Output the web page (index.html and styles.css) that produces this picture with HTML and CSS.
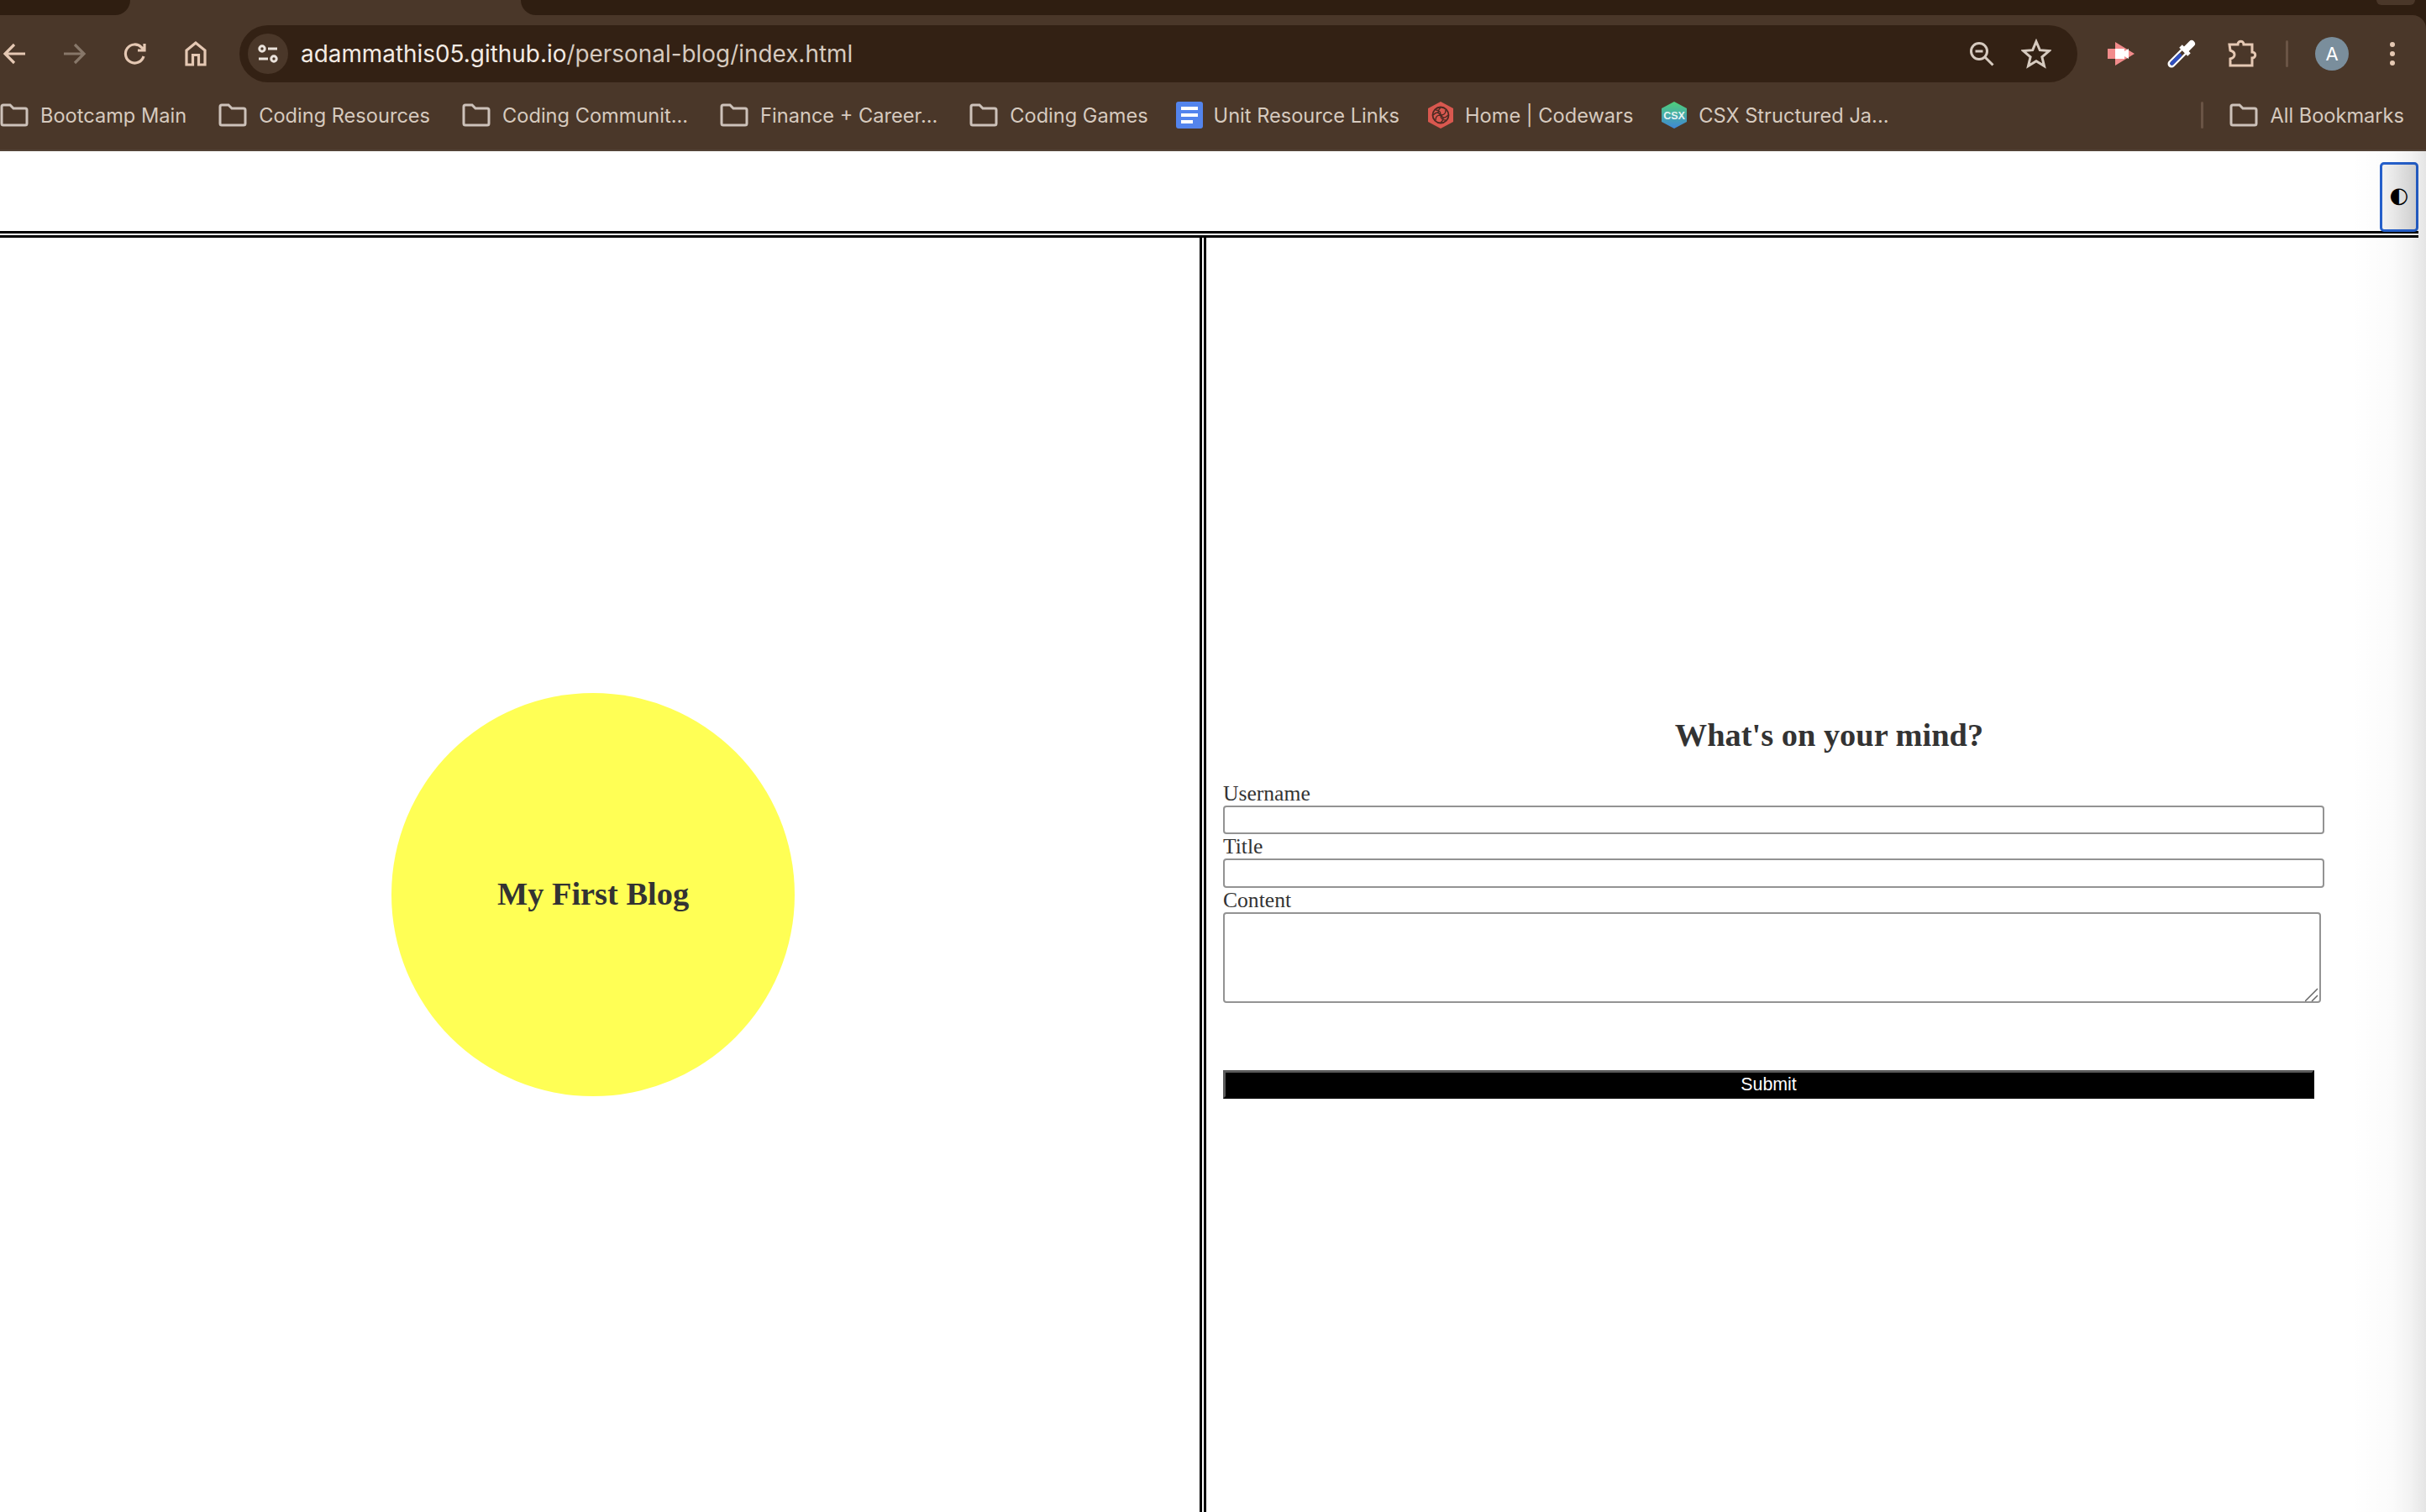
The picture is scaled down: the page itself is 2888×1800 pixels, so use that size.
FILE: index.html
```html
<!DOCTYPE html>
<html lang="en">
<head>
<meta charset="utf-8">
<title>My First Blog</title>
<link rel="stylesheet" href="styles.css">
</head>
<body>
<div class="chrome">
  <div class="tabstrip">
    <div class="tab-left"></div>
    <div class="tab-right"><span class="tab-bump"></span></div>
  </div>
  <div class="toolbar">
    <span class="nav-btn first"><svg class="ico" width="32" height="32" viewBox="0 0 32 32"><path d="M29 16H6M16 5 5 16l11 11" class="st peach"/></svg></span>
    <span class="nav-btn"><svg class="ico" width="32" height="32" viewBox="0 0 32 32"><path d="M3 16h23M16 5l11 11-11 11" class="st dim"/></svg></span>
    <span class="nav-btn"><svg class="ico" width="32" height="32" viewBox="0 0 32 32"><path d="M26 19a11 11 0 1 1-2.500-10.500L27 12M27 4v8h-8" class="st peach"/></svg></span>
    <span class="nav-btn"><svg class="ico" width="32" height="32" viewBox="0 0 32 32"><path d="M16 3 5 12v17h7.500V17.500h7V29H27V12z" class="st peach"/></svg></span>
    <div class="omnibox">
      <span class="site-chip"><svg width="28" height="28" viewBox="0 0 28 28"><circle cx="7" cy="8" r="3.200" class="st light thin"/><path d="M14 8h11M3 20h11" class="st light thin"/><circle cx="21" cy="20" r="3.200" class="st light thin"/></svg></span>
      <span class="url"><span class="url-host">adammathis05.github.io</span>/personal-blog/index.html</span>
      <svg class="omni-zoom" width="32" height="32" viewBox="0 0 32 32"><circle cx="13" cy="13" r="9.500" class="st muted thin"/><path d="M8.500 13h9M20 20l9.500 9.500" class="st muted thin"/></svg>
      <svg class="omni-star" width="36" height="36" viewBox="0 0 36 36"><path d="M18 3.500l4.300 10.200 11 .9-8.400 7.200 2.600 10.800L18 26.800 8.500 32.600l2.600-10.800L2.700 14.600l11-.9z" class="st muted thin"/></svg>
    </div>
    <span class="ext first-ext"><svg width="34" height="30" viewBox="0 0 34 30"><path d="M10 1 33 15 10 29V21H1V9h9z" fill="#f28b8b"/><path d="M10 9h11v3l5-3v12l-5-3v3H10z" fill="#fff"/></svg></span>
    <span class="ext"><svg width="34" height="34" viewBox="0 0 34 34"><path d="M5 29 21 13" class="bottle-outer"/><path d="M5.500 28.500 21 13" class="bottle-inner"/><path d="M5.500 28.500 15 19" class="bottle-ink"/><path d="M16 8 26 18" class="bottle-collar"/><path d="M23 11 29 5" class="bottle-cap"/></svg></span>
    <span class="ext"><svg width="36" height="36" viewBox="0 0 36 36"><path d="M3 7h10c0-5 7-5 7 0h10v9c5 0 5 7 0 7v9H4v-8c4-1 5-3 5-5s-2-4-5-5z" class="st peach thin"/></svg></span>
    <span class="tool-sep"></span>
    <span class="avatar">A</span>
    <span class="menu-dots"><i></i><i></i><i></i></span>
  </div>
  <div class="bookmarks">
    <a class="bm"><svg class="folder" width="34" height="28" viewBox="0 0 34 28"><path d="M2 4a2 2 0 0 1 2-2h8l4 4h14a2 2 0 0 1 2 2v16a2 2 0 0 1-2 2H4a2 2 0 0 1-2-2z" class="st folder-st"/></svg>Bootcamp Main</a>
    <a class="bm"><svg class="folder" width="34" height="28" viewBox="0 0 34 28"><path d="M2 4a2 2 0 0 1 2-2h8l4 4h14a2 2 0 0 1 2 2v16a2 2 0 0 1-2 2H4a2 2 0 0 1-2-2z" class="st folder-st"/></svg>Coding Resources</a>
    <a class="bm"><svg class="folder" width="34" height="28" viewBox="0 0 34 28"><path d="M2 4a2 2 0 0 1 2-2h8l4 4h14a2 2 0 0 1 2 2v16a2 2 0 0 1-2 2H4a2 2 0 0 1-2-2z" class="st folder-st"/></svg>Coding Communit...</a>
    <a class="bm"><svg class="folder" width="34" height="28" viewBox="0 0 34 28"><path d="M2 4a2 2 0 0 1 2-2h8l4 4h14a2 2 0 0 1 2 2v16a2 2 0 0 1-2 2H4a2 2 0 0 1-2-2z" class="st folder-st"/></svg>Finance + Career...</a>
    <a class="bm bm-tight"><svg class="folder" width="34" height="28" viewBox="0 0 34 28"><path d="M2 4a2 2 0 0 1 2-2h8l4 4h14a2 2 0 0 1 2 2v16a2 2 0 0 1-2 2H4a2 2 0 0 1-2-2z" class="st folder-st"/></svg>Coding Games</a>
    <a class="bm bm-tight bm-fav"><svg class="fav" width="32" height="32" viewBox="0 0 32 32"><rect width="32" height="32" rx="3" fill="#5384ed"/><path d="M6 6h20v4H6zM6 14h20v4H6zM6 22h14v4H6z" fill="#fff"/></svg>Unit Resource Links</a>
    <a class="bm bm-tight bm-fav"><svg class="fav" width="32" height="32" viewBox="0 0 32 32"><path d="M16 0 31 8v16l-15 8-15-8V8z" fill="#d9584f"/><circle cx="16" cy="16" r="9.500" fill="none" stroke="#4a2a22" stroke-width="1.800"/><path d="M16 7c-4 4-4 6 0 9s4 5 0 9M7 16c4-4 6-4 9 0s5 4 9 0M10 10c5 0 6 2 6 6s1 6 6 6M22 10c0 5-2 6-6 6s-6 1-6 6" fill="none" stroke="#4a2a22" stroke-width="1.400"/></svg>Home | Codewars</a>
    <a class="bm bm-fav"><svg class="fav" width="32" height="32" viewBox="0 0 32 32"><defs><linearGradient id="csx" x1="0" y1="0" x2="0" y2="1"><stop offset="0" stop-color="#4fd07a"/><stop offset="1" stop-color="#3f86d6"/></linearGradient></defs><path d="M16 0 31 8v16l-15 8-15-8V8z" fill="url(#csx)"/><text x="16" y="20.500" class="csx-text">CSX</text></svg>CSX Structured Ja...</a>
    <span class="bm-sep"></span>
    <a class="bm bm-all"><svg class="folder" width="34" height="28" viewBox="0 0 34 28"><path d="M2 4a2 2 0 0 1 2-2h8l4 4h14a2 2 0 0 1 2 2v16a2 2 0 0 1-2 2H4a2 2 0 0 1-2-2z" class="st folder-st"/></svg>All Bookmarks</a>
  </div>
</div>

<div class="page">
  <header class="site-header">
    <button class="theme-btn" type="button">◐</button>
  </header>
  <main class="split">
    <section class="left-pane">
      <div class="sun"><h1 class="sun-title">My First Blog</h1></div>
    </section>
    <section class="right-pane">
      <h2 class="form-title">What's on your mind?</h2>
      <form class="blog-form">
        <label class="field-label" for="username">Username</label>
        <input class="field" id="username" type="text">
        <label class="field-label" for="title">Title</label>
        <input class="field field-tall" id="title" type="text">
        <label class="field-label" for="content">Content</label>
        <div class="area-wrap">
          <textarea class="field-area" id="content"></textarea>
          <svg class="grip" width="16" height="16" viewBox="0 0 16 16"><path d="M0 16 15 1M8 16l7-7"/></svg>
        </div>
        <button class="submit" type="button">Submit</button>
      </form>
    </section>
  </main>
</div>
<div class="edge-shade"></div>
</body>
</html>
```

FILE: styles.css
```css
* { box-sizing: border-box; }
html, body { height: 100%; }
body {
  margin: 0;
  overflow: hidden;
  background: #fff;
  color: #333;
  font-family: "Liberation Serif", "Times New Roman", serif;
  position: relative;
}

/* browser chrome */
.chrome { height: 180px; background: #2f1e11; font-family: Inter, "Noto Sans", sans-serif; }
.tabstrip { height: 18px; display: flex; background: #4a3729; justify-content: space-between; }
.tab-left { width: 155px; background: #2f1e11; border-bottom-right-radius: 22px; }
.tab-right { flex: 0 0 2268px; background: #2f1e11; border-bottom-left-radius: 22px; position: relative; }
.tab-bump { position: absolute; left: 2209px; top: 0; width: 46px; height: 6px; background: #4a3729; border-radius: 0 0 16px 16px; }

.toolbar { height: 92px; padding-top: 12px; padding-bottom: 12px; display: flex; align-items: center; background: #4a3729; border-top-right-radius: 16px; }
.nav-btn { flex: 0 0 72px; height: 68px; display: flex; align-items: center; justify-content: center; }
.nav-btn.first { margin-left: -19px; }
.st { fill: none; stroke-width: 3.2; stroke-linecap: butt; stroke-linejoin: miter; }
.peach { stroke: #e5c8b3; }
.dim { stroke: #877769; }
.light { stroke: #ebe3dc; }
.muted { stroke: #d6cabf; }
.thin { stroke-width: 3; }
.folder-st { stroke: #cdc2ba; stroke-width: 3; }
.bottle-outer { stroke: #fff; stroke-width: 9; fill: none; stroke-linecap: round; }
.bottle-inner { stroke: #4a3729; stroke-width: 4.5; fill: none; stroke-linecap: round; }
.bottle-ink { stroke: #2f4fc0; stroke-width: 4.5; fill: none; stroke-linecap: round; }
.bottle-collar { stroke: #fff; stroke-width: 5; fill: none; }
.bottle-cap { stroke: #fff; stroke-width: 8; fill: none; stroke-linecap: round; }

.omnibox { flex: 0 0 2188px; margin-left: 16px; height: 68px; border-radius: 34px; background: #332114; display: flex; align-items: center; padding-left: 10px; }
.site-chip { flex: 0 0 48px; height: 48px; border-radius: 50%; background: #4a3729; display: flex; align-items: center; justify-content: center; }
.url { margin-left: 15px; font-size: 27.9px; color: #d6cabf; white-space: nowrap; }
.url-host { color: #f3ebe4; }
.omni-zoom { margin-left: auto; }
.omni-star { margin-left: 31px; margin-right: 31px; }

.ext { flex: 0 0 72px; display: flex; align-items: center; justify-content: center; }
.first-ext { margin-left: 16px; }
.tool-sep { flex: 0 0 3px; height: 32px; margin-left: 16px; background: #6a5445; border-radius: 2px; }
.avatar { flex: 0 0 40px; height: 40px; margin-left: 32px; border-radius: 50%; background: #7a8e9c; color: #fff; font-size: 22px; display: flex; align-items: center; justify-content: center; }
.menu-dots { flex: 0 0 6px; margin-left: 49px; display: flex; flex-direction: column; gap: 5px; align-items: center; }
.menu-dots i { width: 6px; height: 6px; border-radius: 50%; background: #e5c8b3; }

.bookmarks { height: 70px; padding-bottom: 14px; display: flex; align-items: center; background: #4a3729; border-bottom: 2px solid #524236; color: #d6cabf; font-size: 23.6px; white-space: nowrap; }
.bm { display: flex; align-items: center; gap: 14px; margin-right: 38px; }
.bm-tight { margin-right: 33px; }
.bm-fav { gap: 13px; }
.bm .folder { flex: none; }
.bm .fav { flex: none; }
.csx-text { font-family: "Liberation Sans", sans-serif; font-size: 12.5px; font-weight: 700; fill: #e8f4f2; text-anchor: middle; }
.bm-sep { margin-left: auto; flex: 0 0 3px; height: 32px; background: #6a5445; border-radius: 2px; margin-right: 31px; }
.bm-all { margin-right: 26px; }

/* page */
.page { width: 2879px; height: 1620px; }
.site-header { height: 103px; padding-top: 13px; border-bottom: 8px double #000; display: flex; justify-content: flex-end; align-items: flex-start; }
.theme-btn { width: 46px; height: 83px; padding: 0 0 5px; border: 3px solid #2560cc; border-radius: 5px; background: linear-gradient(90deg, #f4f4f4, #dcdcdc); color: #000; font-family: "DejaVu Sans", sans-serif; font-size: 26px; }

.split { display: flex; height: 1564px; }
.left-pane { flex: 0 0 1436px; border-right: 8px double #000; padding-right: 16px; display: flex; align-items: center; justify-content: center; }
.sun { width: 480px; height: 480px; border-radius: 50%; background: #ffff55; display: flex; align-items: center; justify-content: center; }
.sun-title { margin: 0 0 2px; font-size: 38.4px; font-weight: 700; }

.right-pane { flex: 1; min-width: 0; padding: 0 20px; display: flex; flex-direction: column; justify-content: center; }
.form-title { margin: 31px 0 33px; padding-left: 40px; text-align: center; font-size: 38.4px; font-weight: 700; }
.blog-form { display: block; }
.field-label { display: block; font-size: 25.6px; line-height: 29px; }
.field, .field-area { display: block; border: 2px solid #939393; border-radius: 4px; background: #fff; padding: 2px; }
.field { width: 1311px; height: 34px; }
.field-tall { height: 35px; }
.area-wrap { position: relative; width: 1307px; height: 108px; }
.field-area { width: 100%; height: 100%; resize: none; }
.grip { position: absolute; right: 3px; bottom: 2px; fill: none; stroke: #666; stroke-width: 1.5; }
.submit { display: block; width: 1299px; height: 34px; margin-top: 80px; padding: 0; border-width: 3px; border-style: solid; border-color: #5a5a5a #000 #000 #5a5a5a; background: #000; color: #fff; font-family: "Liberation Sans", Arial, sans-serif; font-size: 21.33px; }

.edge-shade { position: absolute; top: 180px; right: 0; bottom: 0; width: 90px; pointer-events: none; background: linear-gradient(90deg, rgba(0,0,0,0) 0%, rgba(0,0,0,.015) 55%, rgba(0,0,0,.05) 80%, rgba(0,0,0,.1) 100%); }
```
